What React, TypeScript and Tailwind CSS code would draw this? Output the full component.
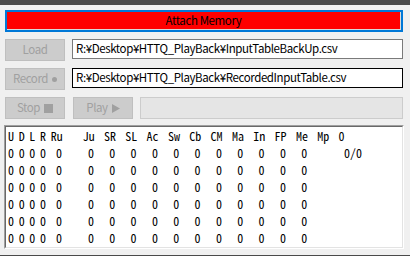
import React from 'react';

// header cells: label, width of the cell in the fixed-pitch text
const cols: Array<{ label: string; w: string; wide: boolean }> = [
  { label: 'U', w: 'w-[10.67px]', wide: false },
  { label: 'D', w: 'w-[10.67px]', wide: false },
  { label: 'L', w: 'w-[10.67px]', wide: false },
  { label: 'R', w: 'w-[10.67px]', wide: false },
  { label: 'Ru', w: 'w-[32px]', wide: true },
  ...['Ju', 'SR', 'SL', 'Ac', 'Sw', 'Cb', 'CM', 'Ma', 'In', 'FP', 'Me', 'Mp'].map((label) => ({
    label,
    w: 'w-[21.33px]',
    wide: true,
  })),
  { label: '0', w: 'w-[40px]', wide: true },
];

const rows: string[][] = Array.from({ length: 6 }, (_, r) =>
  cols.map((c) => {
    if (c.label === 'Mp') return '';
    if (c.label === '0') return r === 0 ? '0/0' : '';
    return '0';
  })
);

const DisabledButton: React.FC<{ children: React.ReactNode }> = ({ children }) => (
  <div className="w-[60px] h-[22px] shrink-0 flex items-center justify-center gap-[4px] border border-[#bfbfbf] bg-[#cccccc] text-[#a0a0a0]">
    {children}
  </div>
);

const PathBox: React.FC<{ text: string; focused?: boolean }> = ({ text, focused }) => (
  <div
    className={
      focused
        ? 'flex-1 h-[20px] flex items-center pl-[3px] bg-white border border-[#000000] text-black whitespace-nowrap overflow-hidden'
        : 'flex-1 h-[20px] flex items-center pl-[3px] bg-white border border-[#7a7a7a] text-black whitespace-nowrap overflow-hidden'
    }
  >
    {text}
  </div>
);

export default function App() {
  return (
    <div className="w-[410px] h-[256px] bg-[#f0f0f0] flex flex-col overflow-hidden font-['Noto_Sans_CJK_JP','Liberation_Sans',sans-serif] text-[11.5px] tracking-[-0.4px]">
      <div className="h-[5px] bg-[#4a4a4a] shrink-0" />

      <div className="flex-1 flex flex-col pl-[5px] pr-[7px] pt-[5px]">
        {/* Attach Memory - focused button */}
        <div className="h-[22px] border-2 border-[#0078d7] flex">
          <div className="flex-1 flex items-center justify-center bg-[#ff0000] border-r border-b border-[#d9d9d9] text-black">
            Attach Memory
          </div>
        </div>

        <div className="mt-[7px] h-[22px] flex items-start gap-[7px]">
          <DisabledButton>Load</DisabledButton>
          <PathBox text="R:¥Desktop¥HTTQ_PlayBack¥InputTableBackUp.csv" />
        </div>

        <div className="mt-[7px] h-[22px] flex items-start gap-[7px]">
          <DisabledButton>
            <span>Record</span>
            <span className="w-[5px] h-[5px] rounded-full bg-[#a0a0a0]" />
          </DisabledButton>
          <PathBox text="R:¥Desktop¥HTTQ_PlayBack¥RecordedInputTable.csv" focused />
        </div>

        <div className="mt-[7px] h-[22px] flex items-start">
          <DisabledButton>
            <span>Stop</span>
            <span className="w-[9px] h-[9px] bg-[#a0a0a0]" />
          </DisabledButton>
          <div className="ml-[8px]">
            <DisabledButton>
              <span>Play</span>
              <svg width="8" height="9" viewBox="0 0 8 9">
                <path d="M0 0 L8 4.5 L0 9 Z" fill="#a0a0a0" />
              </svg>
            </DisabledButton>
          </div>
          <div className="ml-[7px] flex-1 h-[22px] bg-[#e5e5e5] border border-[#cccccc]" />
        </div>

        {/* output text area, sunken 3D border */}
        <div className="mt-[6px] -ml-[1px] -mr-[1px] h-[124px] border border-t-[#a0a0a0] border-l-[#a0a0a0] border-r-white border-b-white">
          <div className="h-full bg-white border border-t-[#696969] border-l-[#696969] border-r-[#e3e3e3] border-b-[#e3e3e3] pl-[2px] font-['Noto_Sans_Mono_CJK_JP','DejaVu_Sans_Mono',monospace] text-[12px] tracking-normal leading-[17px] text-black">
            <div className="flex">
              {cols.map((c) => (
                <span key={c.label} className={`${c.w} shrink-0 whitespace-pre`}>
                  {c.label}
                </span>
              ))}
            </div>
            {rows.map((row, r) => (
              <div key={r} className="flex">
                {row.map((v, i) => (
                  <span
                    key={i}
                    className={
                      cols[i].wide
                        ? `${cols[i].w} shrink-0 pl-[5.33px] whitespace-pre`
                        : `${cols[i].w} shrink-0 whitespace-pre`
                    }
                  >
                    {v}
                  </span>
                ))}
              </div>
            ))}
          </div>
        </div>
      </div>

      <div className="h-[1px] bg-[#4a4a4a] shrink-0" />
    </div>
  );
}
